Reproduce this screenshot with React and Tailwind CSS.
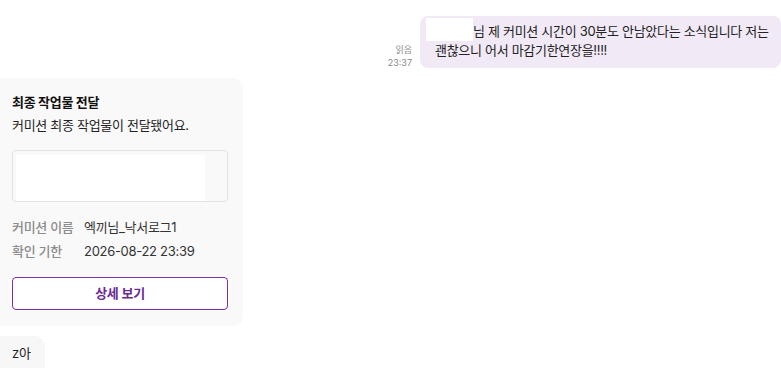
export default function App() {
  const font = { fontFamily: 'Inter, "Noto Sans CJK KR", "Noto Sans", sans-serif' };
  return (
    <div className="w-[781px] h-[368px] bg-white overflow-hidden text-[13px] tracking-[-0.3px] text-[#1a1a1a]" style={font}>
      <div className="flex justify-end items-end gap-[8px] pt-[16px]">
        <div className="flex flex-col items-end text-[9px] leading-[13px] tracking-normal text-[#8a8a8a] -mb-[1px]">
          <span>읽음</span>
          <span>23:37</span>
        </div>
        <div className="w-[361px] bg-[#f1eaf6] rounded-[8px] pl-[15px] pr-[10px] pt-[6px] pb-[8px] leading-[19px] text-[#222]">
          <div className="flex items-end">
            <span className="inline-block w-[47px] h-[23px] bg-white -ml-[9px] -mt-[5px]"></span>
            <span>님 제 커미션 시간이 30분도 안남았다는 소식입니다 저는</span>
          </div>
          <div>괜찮으니 어서 마감기한연장을!!!!</div>
        </div>
      </div>

      <div className="mt-[10px] w-[243px] bg-[#f9f9f9] rounded-r-[10px] pl-[12px] pr-[15px] pt-[15px] pb-[16px]">
        <div className="font-bold leading-[18px] text-[#111]">최종 작업물 전달</div>
        <div className="mt-[5px] leading-[18px] text-[#222]">커미션 최종 작업물이 전달됐어요.</div>
        <div className="mt-[16px] h-[52px] border border-[#e3e3e3] rounded-[4px] pl-[3px] pt-[4px] flex">
          <div className="w-[189px] h-full bg-white"></div>
        </div>
        <div className="mt-[15px] flex leading-[20px]">
          <span className="w-[72px] text-[#8c8c8c] font-medium">커미션 이름</span>
          <span className="text-[#333]">엑끼님_낙서로그1</span>
        </div>
        <div className="mt-[4px] flex leading-[20px]">
          <span className="w-[72px] text-[#8c8c8c] font-medium">확인 기한</span>
          <span className="text-[#333]">2026-08-22 23:39</span>
        </div>
        <button className="mt-[16px] w-full h-[33px] border-[1.5px] border-[#7b2fa8] rounded-[4px] bg-white text-[#6b2a94] font-semibold text-[13px]">
          상세 보기
        </button>
      </div>

      <div className="mt-[10px] inline-block bg-[#f7f7f7] rounded-r-[10px] pl-[12px] pr-[14px] h-[40px] leading-[34px] text-[#222]">
        z아
      </div>
    </div>
  );
}
